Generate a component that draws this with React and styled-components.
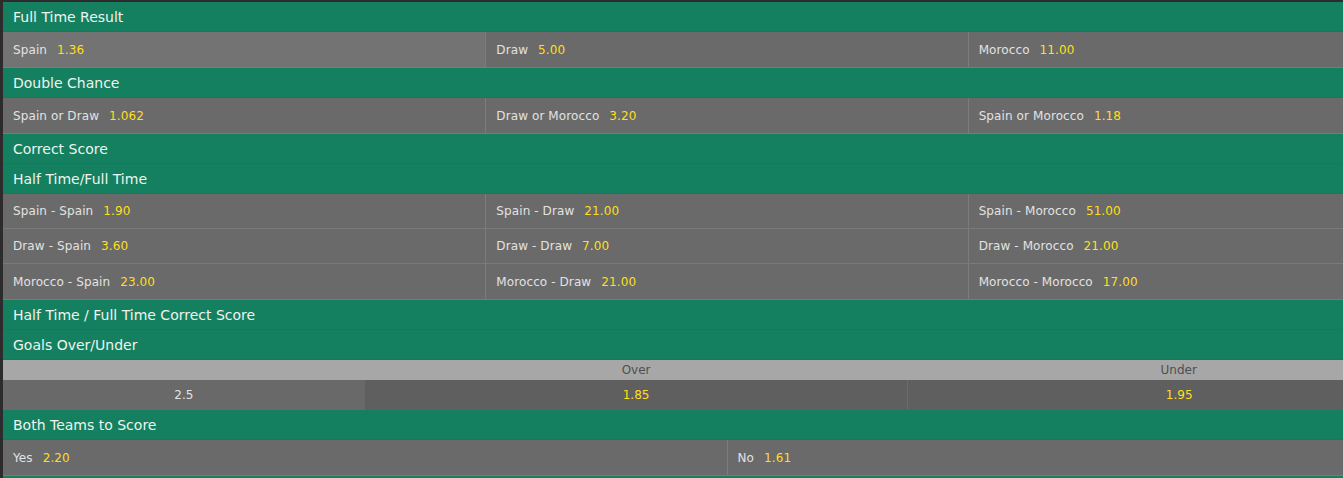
import React from "react";
import styled, { createGlobalStyle } from "styled-components";

const GlobalStyle = createGlobalStyle`
  body {
    margin: 0;
    background: #2e2b2d;
    font-family: "DejaVu Sans", Verdana, sans-serif;
    overflow: hidden;
  }
`;

const Page = styled.div`
  padding: 2px 0 0 3px;
  width: 1447px;
`;

const MarketHeader = styled.div`
  height: 29px;
  line-height: 31px;
  overflow: hidden;
  padding-left: 10px;
  background: #14805f;
  border-bottom: 1px solid #2f6e55;
  color: #eef4ef;
  font-size: 14px;
`;

const Grid = styled.div`
  display: grid;
  grid-template-columns: ${(props) => props.cols || "repeat(3, 1fr)"};
`;

const Cell = styled.div`
  display: flex;
  align-items: center;
  height: ${(props) => props.height || "35px"};
  padding-left: 10px;
  background: ${(props) => (props.active ? "#737373" : "#6a6a6a")};
  border-bottom: 1px solid #7a7a7a;
  border-left: ${(props) => (props.first ? "none" : "1px solid #7c7c7c")};
  color: #e2e2e2;
  font-size: 12px;
  letter-spacing: 0.1px;
`;

const Odds = styled.span`
  margin-left: 10px;
  color: #ffdf1b;
`;

const ColumnHead = styled.div`
  height: 20px;
  line-height: 20px;
  background: #a7a7a7;
  color: #4f4f4f;
  font-size: 12px;
  text-align: center;
`;

const ValueCell = styled.div`
  height: 30px;
  line-height: 31px;
  text-align: center;
  font-size: 12px;
  background: ${(props) => (props.label ? "#696969" : "#5f5f5f")};
  color: ${(props) => (props.label ? "#e2e2e2" : "#ffdf1b")};
  border-left: ${(props) => (props.first ? "none" : "1px solid #6c6c6c")};
`;

const Selection = ({ name, price, first, active, height }) => (
  <Cell first={first} active={active} height={height}>
    {name}
    <Odds>{price}</Odds>
  </Cell>
);

const Row3 = ({ items, activeFirst, height }) => (
  <Grid>
    {items.map(([name, price], i) => (
      <Selection
        key={name}
        name={name}
        price={price}
        first={i === 0}
        active={activeFirst && i === 0}
        height={height}
      />
    ))}
  </Grid>
);

const App = () => (
  <>
    <GlobalStyle />
    <Page>
      <MarketHeader>Full Time Result</MarketHeader>
      <Row3
        activeFirst
        items={[
          ["Spain", "1.36"],
          ["Draw", "5.00"],
          ["Morocco", "11.00"],
        ]}
      />
      <MarketHeader>Double Chance</MarketHeader>
      <Row3
        items={[
          ["Spain or Draw", "1.062"],
          ["Draw or Morocco", "3.20"],
          ["Spain or Morocco", "1.18"],
        ]}
      />
      <MarketHeader>Correct Score</MarketHeader>
      <MarketHeader>Half Time/Full Time</MarketHeader>
      <Row3
        height="34px"
        items={[
          ["Spain - Spain", "1.90"],
          ["Spain - Draw", "21.00"],
          ["Spain - Morocco", "51.00"],
        ]}
      />
      <Row3
        height="34px"
        items={[
          ["Draw - Spain", "3.60"],
          ["Draw - Draw", "7.00"],
          ["Draw - Morocco", "21.00"],
        ]}
      />
      <Row3
        items={[
          ["Morocco - Spain", "23.00"],
          ["Morocco - Draw", "21.00"],
          ["Morocco - Morocco", "17.00"],
        ]}
      />
      <MarketHeader>Half Time / Full Time Correct Score</MarketHeader>
      <MarketHeader>Goals Over/Under</MarketHeader>
      <Grid cols="25% 37.5% 37.5%">
        <ColumnHead />
        <ColumnHead>Over</ColumnHead>
        <ColumnHead>Under</ColumnHead>
        <ValueCell label first>
          2.5
        </ValueCell>
        <ValueCell first>1.85</ValueCell>
        <ValueCell>1.95</ValueCell>
      </Grid>
      <MarketHeader>Both Teams to Score</MarketHeader>
      <Grid cols="1fr 1fr">
        <Selection name="Yes" price="2.20" first />
        <Selection name="No" price="1.61" />
      </Grid>
      <MarketHeader />
    </Page>
  </>
);

export default App;
